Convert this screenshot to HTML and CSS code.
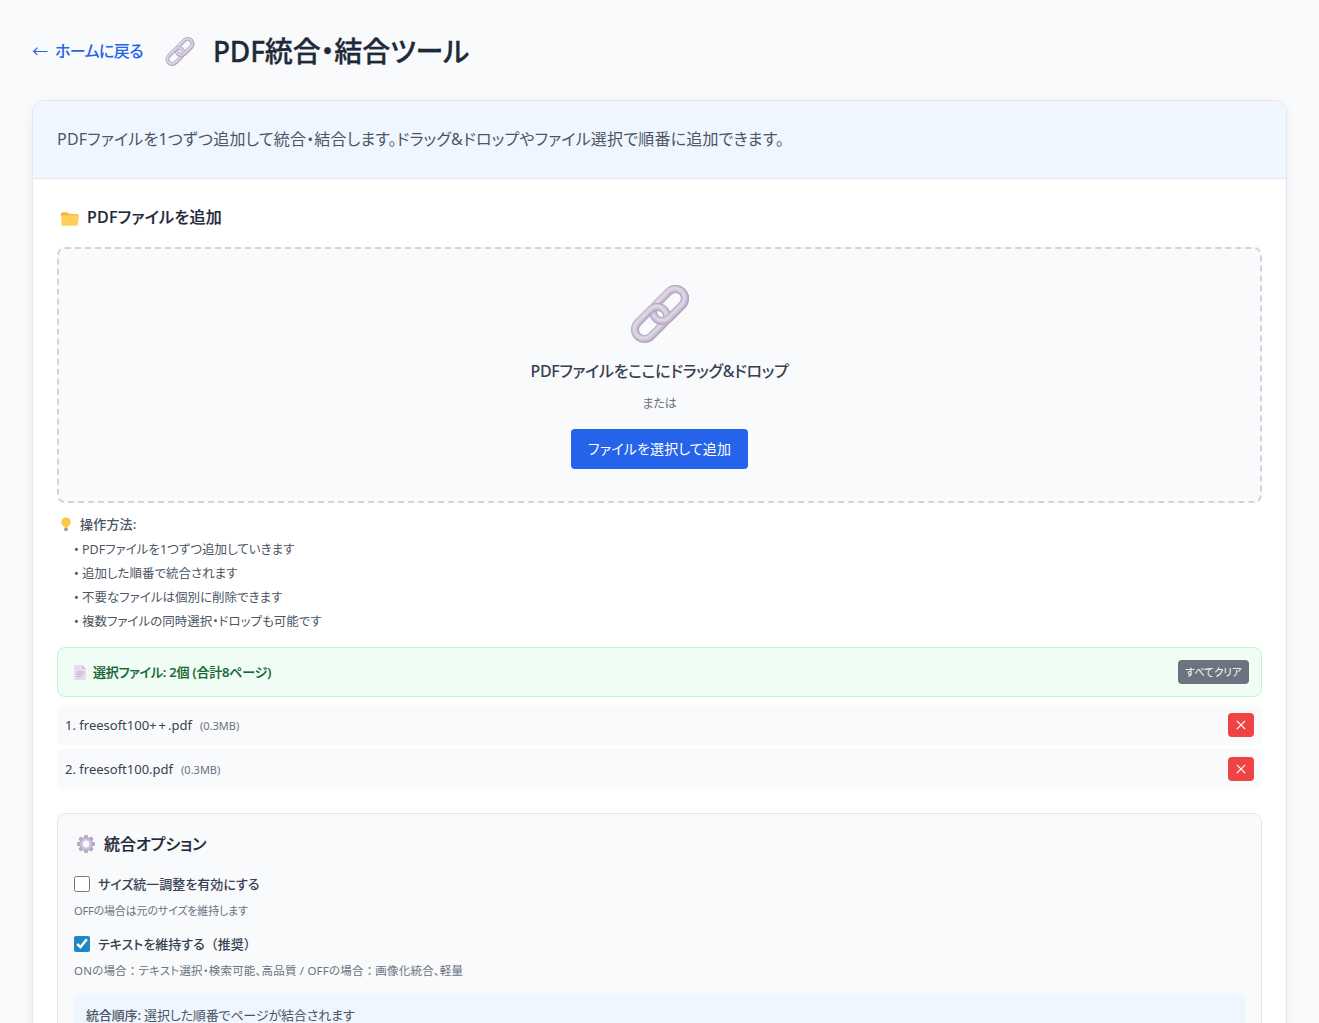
FILE: index.html
```html
<!DOCTYPE html>
<html lang="ja">
<head>
<meta charset="utf-8">
<title>PDF統合・結合ツール</title>
<link rel="stylesheet" href="styles.css">
</head>
<body>
<svg class="defs" width="0" height="0" aria-hidden="true">
  <defs>
    <clipPath id="front"><polygon points="60,-1 61,61 -1,60"/></clipPath>
    <g id="ring-a">
      <rect x="-18.700" y="-9.500" width="37.400" height="19" rx="9.500" transform="translate(39 20) rotate(-45)" fill="none" stroke="#b0a3be" stroke-width="8"/>
      <rect x="-18.700" y="-10" width="37.400" height="19" rx="9.500" transform="translate(39 20) rotate(-45)" fill="none" stroke="#c9bfd3" stroke-width="6"/>
      <rect x="-18.700" y="-10.500" width="37.400" height="19" rx="9.500" transform="translate(39 20) rotate(-45)" fill="none" stroke="#dcd5e3" stroke-width="3"/>
    </g>
    <g id="ring-b">
      <rect x="-18.700" y="-9.500" width="37.400" height="19" rx="9.500" transform="translate(21 38) rotate(-45)" fill="none" stroke="#b0a3be" stroke-width="8"/>
      <rect x="-18.700" y="-10" width="37.400" height="19" rx="9.500" transform="translate(21 38) rotate(-45)" fill="none" stroke="#c9bfd3" stroke-width="6"/>
      <rect x="-18.700" y="-10.500" width="37.400" height="19" rx="9.500" transform="translate(21 38) rotate(-45)" fill="none" stroke="#dcd5e3" stroke-width="3"/>
    </g>
    <symbol id="link" viewBox="0 0 60 60">
      <use href="#ring-a"/>
      <use href="#ring-b"/>
      <g clip-path="url(#front)"><use href="#ring-a"/></g>
    </symbol>
  </defs>
</svg>
<div class="page">
  <header class="top">
    <a class="back" href="#"><span class="arrow">←</span>ホームに戻る</a>
    <h1 class="title"><svg class="link-small"><use href="#link"/></svg><span>PDF統合・結合ツール</span></h1>
  </header>
  <main class="card">
    <div class="intro">PDFファイルを1つずつ追加して統合・結合します。ドラッグ&amp;ドロップやファイル選択で順番に追加できます。</div>
    <div class="content">
      <h2 class="section-title">
        <svg class="ic-folder" viewBox="0 0 20 18" preserveAspectRatio="none"><path d="M1 3.200C1 2 1.800 1.400 2.800 1.400h4c.8 0 1.200.3 1.700 1l.8 1h7.500c1.200 0 1.700.8 1.700 1.800v.8H1z" fill="#f5b63f"/><path d="M1.400 6.600c.1-1 .9-1.700 1.900-1.700h13.600c1.300 0 2.200 1 2 2.200l-1.200 8c-.2 1-.9 1.500-1.900 1.500H3c-1 0-1.700-.7-1.700-1.700z" fill="#ffcf5c"/></svg>
        PDFファイルを追加
      </h2>
      <div class="drop">
        <svg class="link-big"><use href="#link"/></svg>
        <div class="drop-title">PDFファイルをここにドラッグ&amp;ドロップ</div>
        <div class="drop-or">または</div>
        <button class="primary">ファイルを選択して追加</button>
      </div>
      <div class="howto">
        <div class="howto-head">
          <svg class="ic-bulb" viewBox="0 0 14 18"><circle cx="7" cy="6.200" r="5.600" fill="#fbc844"/><path d="M4.400 9.500h5.200L8.800 13H5.200z" fill="#fbc844"/><rect x="4.800" y="12.800" width="4.400" height="4" rx="1" fill="#a99bb6"/></svg>
          <strong>操作方法:</strong>
        </div>
        <div class="howto-line">• PDFファイルを1つずつ追加していきます</div>
        <div class="howto-line">• 追加した順番で統合されます</div>
        <div class="howto-line">• 不要なファイルは個別に削除できます</div>
        <div class="howto-line">• 複数ファイルの同時選択・ドロップも可能です</div>
      </div>
      <div class="selected">
        <div class="selected-label">
          <svg class="ic-doc" viewBox="0 0 12 15"><path d="M0 1a1 1 0 0 1 1-1h7l4 4v10a1 1 0 0 1-1 1H1a1 1 0 0 1-1-1z" fill="#e6dcef"/><path d="M8 0l4 4H8z" fill="#cfc3da"/><path d="M2.500 7h7M2.500 9.300h7M2.500 11.600h4.500" stroke="#b7a9c4" stroke-width="1"/></svg>
          <span>選択ファイル: 2個 (合計8ページ)</span>
        </div>
        <button class="clear">すべてクリア</button>
      </div>
      <div class="file-row">
        <div class="file-info"><span class="file-name">1. freesoft100<span class="plus">++</span>.pdf</span><span class="file-size">(0.3MB)</span></div>
        <button class="del"><svg viewBox="0 0 10 10"><path d="M.8.8l8.400 8.400M9.200.8L.8 9.200" stroke="#fff" stroke-width="1.200" fill="none"/></svg></button>
      </div>
      <div class="file-row">
        <div class="file-info"><span class="file-name">2. freesoft100.pdf</span><span class="file-size">(0.3MB)</span></div>
        <button class="del"><svg viewBox="0 0 10 10"><path d="M.8.8l8.400 8.400M9.200.8L.8 9.200" stroke="#fff" stroke-width="1.200" fill="none"/></svg></button>
      </div>
      <section class="options">
        <h3 class="options-title">
          <svg class="ic-gear" viewBox="0 0 20 20"><g fill="#b5a8c6"><circle cx="10" cy="10" r="7"/><rect x="8" y="1" width="4" height="18" rx="1"/><rect x="8" y="1" width="4" height="18" rx="1" transform="rotate(45 10 10)"/><rect x="8" y="1" width="4" height="18" rx="1" transform="rotate(90 10 10)"/><rect x="8" y="1" width="4" height="18" rx="1" transform="rotate(135 10 10)"/></g><circle cx="10" cy="10" r="6" fill="#cbc0d7"/><circle cx="10" cy="10" r="3.400" fill="#f8fafc"/></svg>
          統合オプション
        </h3>
        <label class="check"><input type="checkbox"><span>サイズ統一調整を有効にする</span></label>
        <p class="hint hint-short">OFFの場合は元のサイズを維持します</p>
        <label class="check"><input type="checkbox" checked><span>テキストを維持する<span class="full">（推奨）</span></span></label>
        <p class="hint hint-long">ONの場合<span class="full">：</span>テキスト選択・検索可能、高品質 / OFFの場合<span class="full">：</span>画像化統合、軽量</p>
        <div class="order"><strong>統合順序:</strong> 選択した順番でページが結合されます</div>
      </section>
    </div>
  </main>
</div>
</body>
</html>
```

FILE: styles.css
```css
* { box-sizing: border-box; }
html, body { margin: 0; height: 100%; overflow: hidden; }
body {
  background: #f8fafc;
  color: #1f2937;
  font-family: "Noto Sans", "Noto Sans CJK JP", sans-serif;
  font-feature-settings: "palt";
  font-size: 14px;
}
.defs { position: absolute; }
.full { font-feature-settings: normal; }
.page { padding: 32px 32px 0; }
.top { display: flex; align-items: center; gap: 22px; height: 36px; margin-bottom: 32px; }
.back { display: flex; align-items: center; color: #2563eb; font-size: 16px; font-weight: 500; letter-spacing: -.6px; text-decoration: none; }
.arrow { width: 23px; font-weight: 400; font-family: "Noto Sans CJK JP", sans-serif; font-feature-settings: normal; }
.title { display: flex; align-items: center; gap: 18px; margin: 0; padding-top: 1px; font-size: 28px; font-weight: 500; letter-spacing: -.15px; color: #1f2937; line-height: 36px; -webkit-text-stroke: .3px; }
.link-small { width: 30px; height: 30px; margin-top: 3px; }
.card { background: #fff; border: 1px solid #e5e7eb; border-radius: 12px; box-shadow: 0 4px 12px rgba(0,0,0,.06); overflow: hidden; }
.intro { height: 78px; display: flex; align-items: center; padding: 0 24px 4px; background: #eff6ff; border-bottom: 1px solid #e5e7eb; color: #4b5563; font-size: 16px; letter-spacing: .2px; }
.content { padding: 24px; }
.section-title { display: flex; align-items: center; gap: 7px; margin: 0 0 16px; height: 28px; padding: 0 0 2px 3px; font-size: 16px; font-weight: 500; letter-spacing: .3px; color: #1f2937; -webkit-text-stroke: .2px; }
.ic-folder { width: 20px; height: 16px; margin-top: 5px; }
.drop { height: 256px; display: flex; flex-direction: column; align-items: center; padding-top: 36px; background: #f9fafb; border: 2px dashed #d1d5db; border-radius: 8px; }
.link-big { width: 60px; height: 60px; }
.drop-title { margin-top: 12px; font-size: 16px; font-weight: 500; letter-spacing: -.3px; color: #374151; line-height: 28px; }
.drop-or { margin-top: 9px; font-size: 12px; color: #6b7280; line-height: 20px; }
.primary { margin-top: 15px; width: 177px; height: 40px; padding: 0 0 2px; background: #2563eb; color: #fff; border: 0; border-radius: 4px; font: inherit; font-size: 14px; letter-spacing: .15px; }
.howto { margin-top: 9px; color: #4b5563; font-size: 12.500px; line-height: 24px; }
.howto-head { display: flex; align-items: center; gap: 8px; margin-bottom: 2px; padding-left: 3px; font-size: 13px; }
.howto-head strong { font-weight: 500; letter-spacing: .2px; }
.ic-bulb { width: 12px; height: 15px; }
.howto-line { padding-left: 17px; }
.selected { display: flex; align-items: center; justify-content: space-between; height: 50px; margin-top: 13px; padding: 0 12px 0 16px; background: #f0fdf4; border: 1px solid #bbf7d0; border-radius: 8px; }
.selected-label { display: flex; align-items: center; gap: 7px; color: #166534; font-size: 13px; font-weight: 500; letter-spacing: -.2px; -webkit-text-stroke: .2px; }
.selected-label span { padding-bottom: 2px; }
.ic-doc { width: 12px; height: 15px; }
.clear { height: 24px; width: 71px; padding: 0 0 1px; background: #6b7280; color: #fff; border: 0; border-radius: 4px; font: inherit; font-size: 10.500px; }
.file-row { display: flex; align-items: center; justify-content: space-between; height: 40px; margin-top: 4px; padding: 0 8px; background: #f9fafb; border-radius: 6px; }
.selected + .file-row { margin-top: 8px; }
.file-info { padding-bottom: 2px; }
.file-name { color: #374151; font-size: 13px; }
.plus { letter-spacing: 2px; }
.file-size { margin-left: 8px; color: #6b7280; font-size: 11px; }
.del { display: flex; align-items: center; justify-content: center; width: 26px; height: 24px; padding: 0; background: #ef4444; border: 0; border-radius: 4px; }
.del svg { width: 10px; height: 10px; }
.options { margin-top: 24px; padding: 16px; background: #f8fafc; border: 1px solid #e5e7eb; border-radius: 8px; }
.options-title { display: flex; align-items: center; gap: 8px; margin: 0 0 14px; height: 28px; padding: 0 0 2px 2px; font-size: 16px; font-weight: 500; color: #1f2937; -webkit-text-stroke: .2px; }
.ic-gear { width: 20px; height: 20px; margin-top: 2px; }
.check { display: flex; align-items: center; gap: 8px; height: 24px; color: #374151; font-size: 13px; font-weight: 500; }
.check > span { margin-top: -2px; }
.check input { width: 16px; height: 16px; margin: 0; accent-color: #1e88c7; }
.hint { margin: 5px 0 11px; font-size: 11px; line-height: 20px; color: #6b7280; }
.hint-short { letter-spacing: -.15px; }
.hint-long { font-size: 11.500px; letter-spacing: .2px; }
.order { margin-top: 12px; padding: 12px 12px 10px; background: #eff6ff; border-radius: 6px; color: #4b5563; font-size: 13px; letter-spacing: -.15px; }
.order strong { font-weight: 500; }
```
